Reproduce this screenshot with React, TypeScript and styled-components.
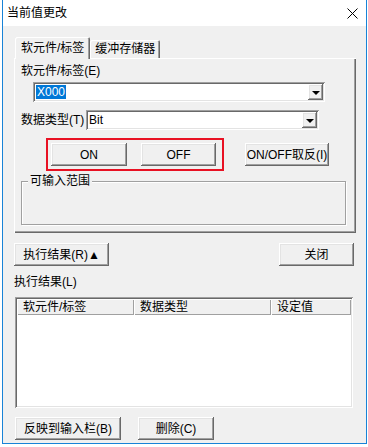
import styled, { createGlobalStyle } from "styled-components";

const GlobalStyle = createGlobalStyle`
  html, body {
    margin: 0;
    padding: 0;
    background: #ffffff;
  }
  body {
    font-family: "Liberation Sans", "Noto Sans CJK SC", sans-serif;
    font-size: 12px;
    color: #000;
  }
`;

const raised = `
  box-shadow:
    inset -1px -1px #696969,
    inset 1px 1px #ffffff,
    inset -2px -2px #a0a0a0,
    inset 2px 2px #e3e3e3;
`;

const sunken = `
  box-shadow:
    inset 1px 1px #a0a0a0,
    inset -1px -1px #ffffff,
    inset 2px 2px #696969,
    inset -2px -2px #e3e3e3;
`;

const App = () => {
  return (
    <>
      <GlobalStyle />
      <Window>
        <TitleBar>
          <Title>当前值更改</Title>
          <CloseIcon width="11" height="11" viewBox="0 0 11 11">
            <path d="M0.5 0.5 L10.5 10.5 M10.5 0.5 L0.5 10.5" stroke="#000" strokeWidth="1" />
          </CloseIcon>
        </TitleBar>
        <Body>
          <TabStrip>
            <Tab active>软元件/标签</Tab>
            <Tab>缓冲存储器</Tab>
          </TabStrip>
          <Panel>
            <FieldLabel>软元件/标签(E)</FieldLabel>
            <Combo w={292} ml={12}>
              <ComboText>
                <Selected>X000</Selected>
              </ComboText>
              <DropButton>
                <Arrow />
              </DropButton>
            </Combo>
            <Row mt={8}>
              <InlineLabel>数据类型(T)</InlineLabel>
              <Combo w={233}>
                <ComboText>Bit</ComboText>
                <DropButton>
                  <Arrow />
                </DropButton>
              </Combo>
            </Row>
            <ActionRow>
              <Highlight>
                <Button w={76}>ON</Button>
                <Button w={75}>OFF</Button>
              </Highlight>
              <Button w={84} h={23}>ON/OFF取反(I)</Button>
            </ActionRow>
            <GroupBox>
              <GroupLabel>可输入范围</GroupLabel>
            </GroupBox>
          </Panel>
          <SplitRow>
            <Button w={95}>执行结果(R)▲</Button>
            <Button w={75}>关闭</Button>
          </SplitRow>
          <ResultLabel>执行结果(L)</ResultLabel>
          <ListView>
            <HeaderRow>
              <HeaderCell w={117}>软元件/标签</HeaderCell>
              <HeaderCell w={137}>数据类型</HeaderCell>
              <HeaderCell w={80}>设定值</HeaderCell>
            </HeaderRow>
          </ListView>
          <BottomRow>
            <Button w={106}>反映到输入栏(B)</Button>
            <Button w={76}>删除(C)</Button>
          </BottomRow>
        </Body>
      </Window>
    </>
  );
};

export default App;

const Window = styled.div`
  margin-left: 2px;
  width: 365px;
  height: 444px;
  box-sizing: border-box;
  border: 1px solid #1883d7;
  border-top: none;
  display: flex;
  flex-direction: column;
  background: #f0f0f0;
`;

const TitleBar = styled.div`
  height: 26px;
  background: #ffffff;
  display: flex;
  align-items: center;
  justify-content: space-between;
  padding: 0 8px 0 4px;
  flex-shrink: 0;
`;

const Title = styled.span`
  font-size: 12px;
  line-height: 14px;
`;

const CloseIcon = styled.svg`
  display: block;
`;

const Body = styled.div`
  flex: 1;
  display: flex;
  flex-direction: column;
  padding: 11px 0 0 11px;
`;

const TabStrip = styled.div`
  display: flex;
  align-items: flex-end;
  height: 21px;
  padding-left: 1px;
  position: relative;
  z-index: 1;
`;

const Tab = styled.div<{ active?: boolean }>`
  height: ${(p) => (p.active ? "22px" : "18px")};
  margin-bottom: ${(p) => (p.active ? "-1px" : "0")};
  padding: ${(p) => (p.active ? "0 6px 0 6px" : "0 5px")};
  box-sizing: border-box;
  display: flex;
  align-items: center;
  background: #f0f0f0;
  border-radius: 2px 2px 0 0;
  box-shadow:
    inset 1px 1px #ffffff,
    inset -1px 0 #696969,
    inset -2px 0 #a0a0a0;
  white-space: nowrap;
  line-height: 14px;
  font-size: 12px;
`;

const Panel = styled.div`
  width: 342px;
  height: 175px;
  box-sizing: border-box;
  padding: 6px 0 0 7px;
  box-shadow:
    inset 1px 1px #ffffff,
    inset -1px -1px #696969,
    inset -2px -2px #a0a0a0;
  display: flex;
  flex-direction: column;
`;

const FieldLabel = styled.div`
  line-height: 14px;
  height: 14px;
  margin-bottom: 4px;
  white-space: nowrap;
`;

const Row = styled.div<{ mt?: number }>`
  display: flex;
  align-items: center;
  margin-top: ${(p) => p.mt ?? 0}px;
`;

const InlineLabel = styled.span`
  width: 65px;
  white-space: nowrap;
  line-height: 14px;
`;

const Combo = styled.div<{ w: number; ml?: number }>`
  width: ${(p) => p.w}px;
  height: 20px;
  margin-left: ${(p) => p.ml ?? 0}px;
  box-sizing: border-box;
  background: #ffffff;
  ${sunken}
  display: flex;
  align-items: center;
  padding: 2px;
`;

const ComboText = styled.div`
  flex: 1;
  padding-left: 1px;
  line-height: 14px;
  display: flex;
  align-items: center;
`;

const Selected = styled.span`
  background: #0078d7;
  color: #ffffff;
  padding: 0 1px;
  line-height: 14px;
`;

const DropButton = styled.div`
  width: 15px;
  height: 16px;
  box-sizing: border-box;
  background: #f0f0f0;
  ${raised}
  display: flex;
  align-items: center;
  justify-content: center;
`;

const Arrow = styled.div`
  width: 0;
  height: 0;
  border-left: 4px solid transparent;
  border-right: 4px solid transparent;
  border-top: 4px solid #000;
  margin-top: 1px;
`;

const ActionRow = styled.div`
  display: flex;
  align-items: center;
  margin-top: 8px;
  margin-left: 25px;
  gap: 21px;
`;

const Highlight = styled.div`
  display: flex;
  gap: 14px;
  border: 2px solid #e81123;
  padding: 3px 6px 3px 3px;
`;

const Button = styled.div<{ w: number; h?: number }>`
  width: ${(p) => p.w}px;
  height: ${(p) => p.h ?? 23}px;
  box-sizing: border-box;
  background: #f0f0f0;
  ${raised}
  display: flex;
  align-items: center;
  justify-content: center;
  white-space: nowrap;
  line-height: 14px;
  font-size: 12px;
`;

const GroupBox = styled.div`
  position: relative;
  width: 325px;
  height: 44px;
  margin-top: 10px;
  box-sizing: border-box;
  border: 1px solid #a0a0a0;
  box-shadow: inset 1px 1px #ffffff, 1px 1px #ffffff;
`;

const GroupLabel = styled.span`
  position: absolute;
  left: 6px;
  top: -8px;
  padding: 0 2px;
  background: #f0f0f0;
  line-height: 14px;
`;

const SplitRow = styled.div`
  display: flex;
  justify-content: space-between;
  width: 340px;
  margin-top: 10px;
`;

const ResultLabel = styled.div`
  margin-top: 9px;
  line-height: 14px;
  height: 14px;
`;

const ListView = styled.div`
  width: 338px;
  height: 111px;
  margin-top: 8px;
  margin-left: 1px;
  box-sizing: border-box;
  background: #ffffff;
  padding: 2px;
  ${sunken}
`;

const HeaderRow = styled.div`
  display: flex;
  height: 16px;
`;

const HeaderCell = styled.div<{ w: number }>`
  width: ${(p) => p.w}px;
  box-sizing: border-box;
  padding-left: 6px;
  background: #f0f0f0;
  box-shadow:
    inset 1px 1px #ffffff,
    inset -1px -1px #a0a0a0;
  display: flex;
  align-items: center;
  line-height: 14px;
  white-space: nowrap;
`;

const BottomRow = styled.div`
  display: flex;
  gap: 17px;
  margin-top: 9px;
  margin-left: 1px;
`;
